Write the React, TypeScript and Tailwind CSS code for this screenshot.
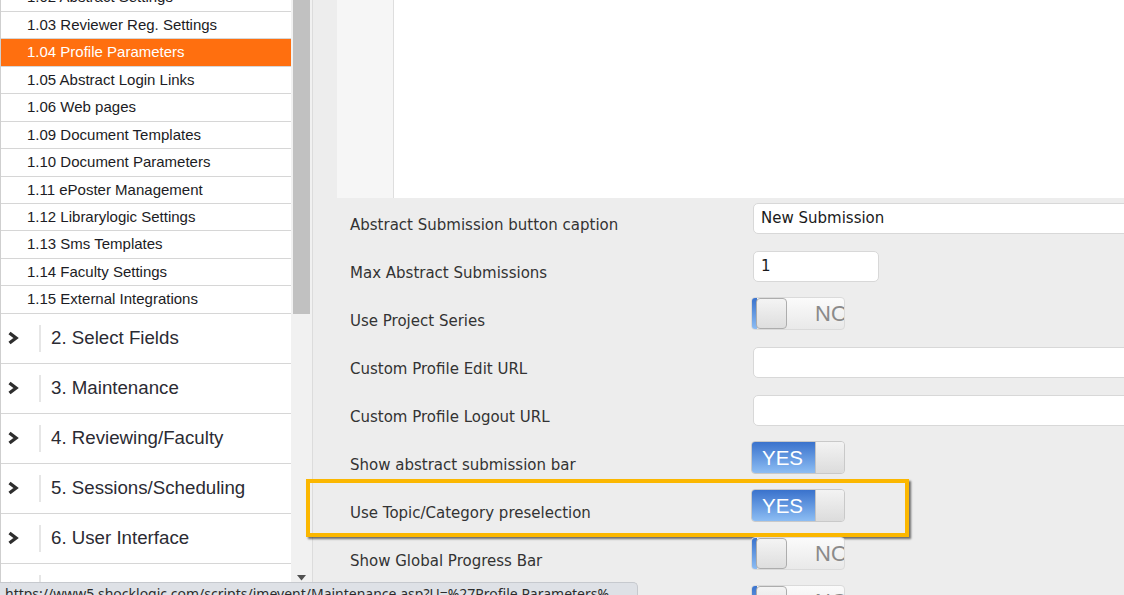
import React from 'react';

const subItems = [
  '1.02 Abstract Settings',
  '1.03 Reviewer Reg. Settings',
  '1.04 Profile Parameters',
  '1.05 Abstract Login Links',
  '1.06 Web pages',
  '1.09 Document Templates',
  '1.10 Document Parameters',
  '1.11 ePoster Management',
  '1.12 Librarylogic Settings',
  '1.13 Sms Templates',
  '1.14 Faculty Settings',
  '1.15 External Integrations',
];

// last one sits under the browser status bar
const sections = [
  '2. Select Fields',
  '3. Maintenance',
  '4. Reviewing/Faculty',
  '5. Sessions/Scheduling',
  '6. User Interface',
  '',
];

type Field =
  | { label: string; kind: 'text'; value: string; small?: boolean }
  | { label: string; kind: 'toggle'; on: boolean; highlight?: boolean };

const fields: Field[] = [
  { label: 'Abstract Submission button caption', kind: 'text', value: 'New Submission' },
  { label: 'Max Abstract Submissions', kind: 'text', value: '1', small: true },
  { label: 'Use Project Series', kind: 'toggle', on: false },
  { label: 'Custom Profile Edit URL', kind: 'text', value: '' },
  { label: 'Custom Profile Logout URL', kind: 'text', value: '' },
  { label: 'Show abstract submission bar', kind: 'toggle', on: true },
  { label: 'Use Topic/Category preselection', kind: 'toggle', on: true, highlight: true },
  { label: 'Show Global Progress Bar', kind: 'toggle', on: false },
  { label: '', kind: 'toggle', on: false },
];

function Chevron() {
  return (
    <svg width="12" height="14" viewBox="0 0 12 14" className="shrink-0">
      <path d="M2.5 2 L9 7 L2.5 12" fill="none" stroke="#2e2e2e" strokeWidth="3.4" strokeLinejoin="miter" />
    </svg>
  );
}

function Toggle({ on }: { on: boolean }) {
  if (on) {
    return (
      <div className="flex w-[94px] h-[33px] rounded-[4px] border border-[#c9c9c9] overflow-hidden">
        <div className="w-[63px] h-full bg-gradient-to-b from-[#3a72cc] to-[#8dbdf3] text-white text-[20.5px] leading-[31px] pl-[10px] font-['Liberation_Sans',Arial,sans-serif]">
          YES
        </div>
        <div className="flex-1 h-full bg-gradient-to-b from-[#f3f3f3] to-[#dcdcdc] border-l border-[#c3c3c3]" />
      </div>
    );
  }
  return (
    <div className="relative flex w-[94px] h-[33px] rounded-[4px] border border-[#dadada] overflow-hidden bg-gradient-to-b from-[#fbfbfb] to-[#e9e9e9]">
      <div className="w-[5px] h-full shrink-0 bg-gradient-to-b from-[#3a72cc] to-[#8dbdf3]" />
      <div className="w-[31px] h-full shrink-0 -ml-[1px] rounded-[4px] border border-[#adadad] bg-gradient-to-b from-[#f4f4f4] to-[#dedede]" />
      <div className="shrink-0 text-[#8a8a8a] text-[22px] leading-[31px] pl-[28px] whitespace-nowrap font-['Liberation_Sans',Arial,sans-serif]">
        NO
      </div>
    </div>
  );
}

export default function App() {
  return (
    <div className="relative w-[1124px] h-[595px] overflow-hidden flex bg-[#ededed] font-['DejaVu_Sans',Verdana,sans-serif]">
      {/* sidebar menu */}
      <aside className="w-[291px] shrink-0 h-full bg-white border-l border-[#cfcfcf] overflow-hidden font-['Liberation_Sans',Arial,sans-serif]">
        <div className="-mt-[15.5px]">
          {subItems.map((item) => {
            const active = item.startsWith('1.04');
            return (
              <div
                key={item}
                className={`h-[27.45px] flex items-center pl-[26px] text-[15px] border-b border-[#d6d6d6] ${
                  active ? 'bg-[#ff6f0f] text-white' : 'text-[#1c1c24]'
                }`}
              >
                {item}
              </div>
            );
          })}
          {sections.map((s, i) => (
            <div key={i} className="h-[50px] flex items-center border-b border-[#d6d6d6]">
              <div className="w-[38px] pl-[6px] flex items-center">
                <Chevron />
              </div>
              <div className="w-[2px] h-[27px] bg-[#e6e6e6]" />
              <div className="pl-[10px] text-[18.7px] text-[#2b2b33]">{s}</div>
            </div>
          ))}
        </div>
      </aside>

      {/* scrollbar */}
      <div className="w-[22px] shrink-0 h-full bg-[#f1f1f1] border-r border-[#dcdcdc] flex flex-col justify-between">
        <div className="mx-[2px] h-[314px] bg-[#c1c1c1]" />
        <div className="flex justify-center pb-[14px]">
          <svg width="9" height="6" viewBox="0 0 9 6">
            <path d="M0 0 H9 L4.5 5.5 Z" fill="#505050" />
          </svg>
        </div>
      </div>

      {/* main content */}
      <main className="flex-1 h-full">
        <div className="ml-[24px] h-[198px] flex">
          <div className="w-[57px] h-full bg-[#f6f6f6] border-r border-[#dedede]" />
          <div className="flex-1 h-full bg-white" />
        </div>

        <div>
          {fields.map((f, i) => (
            <div key={i} className="relative h-[48px] flex pl-[37px]">
              {f.kind === 'toggle' && f.highlight && (
                <div className="absolute -left-[7px] -top-[7px] w-[603px] h-[58px] border-[4px] border-[#fbb700] shadow-[2px_2px_2px_rgba(0,0,0,0.55)]" />
              )}
              <div className="w-[401px] shrink-0 pt-[17px] text-[15px] leading-[20px] text-[#333]">{f.label}</div>
              {f.kind === 'text' ? (
                <div className="pt-[5px] pl-[2px]">
                  <div
                    className={`h-[31px] rounded-[5px] border border-[#d8d8d8] bg-white px-[7px] text-[15px] leading-[29px] text-[#1a1a1a] ${
                      f.small ? 'w-[126px]' : 'w-[420px]'
                    }`}
                  >
                    {f.value}
                  </div>
                </div>
              ) : (
                <div className="pt-[3px]">
                  <Toggle on={f.on} />
                </div>
              )}
            </div>
          ))}
        </div>
      </main>

      {/* browser status bar */}
      <div className="absolute left-0 top-[582px] w-[638px] h-[24px] bg-[#dee1e6] border-t border-r border-[#c6c9ce] rounded-tr-[5px] pl-[5px] pt-[3px] text-[14px] leading-[16px] text-[#2d2d2d] whitespace-nowrap font-['Noto_Sans',sans-serif]">
        https://www5.shocklogic.com/scripts/jmevent/Maintenance.asp?U=%27Profile Parameters%
      </div>
    </div>
  );
}
